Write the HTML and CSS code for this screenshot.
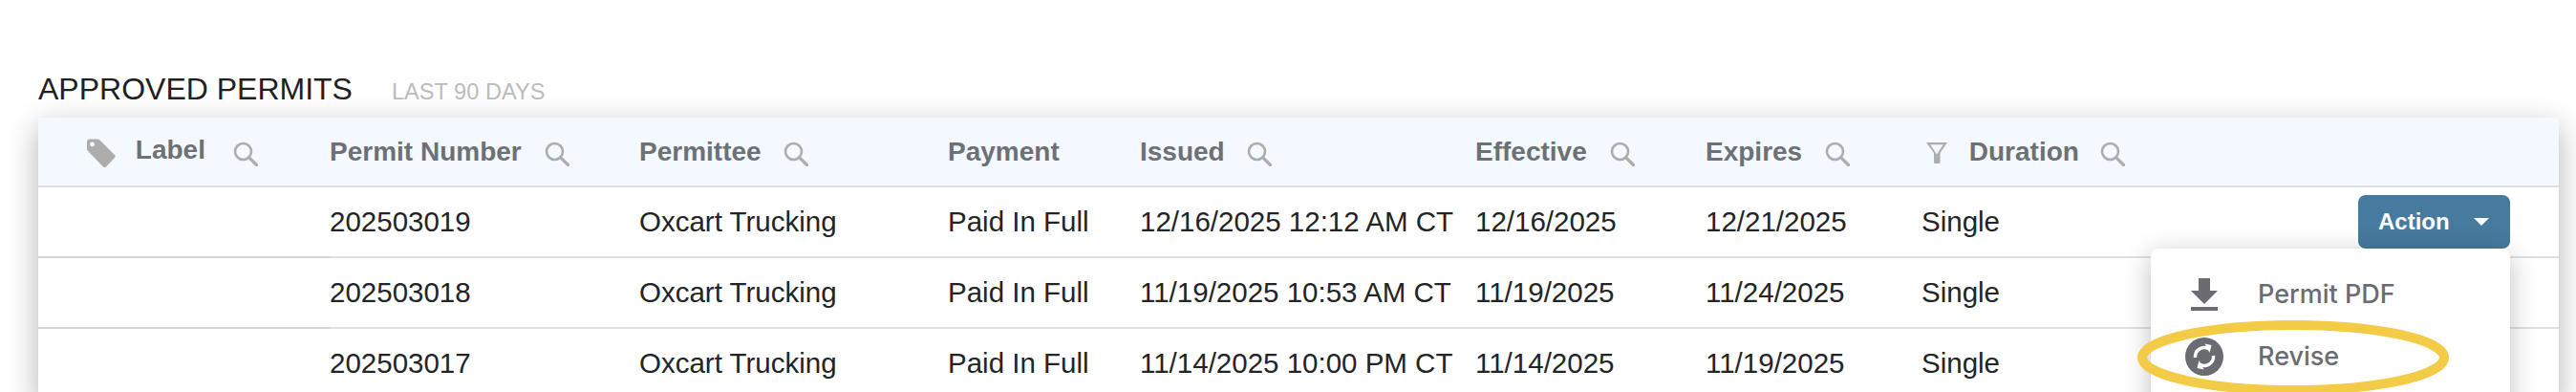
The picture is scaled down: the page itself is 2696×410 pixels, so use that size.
FILE: index.html
```html
<!DOCTYPE html>
<html lang="en">
<head>
    <meta charset="UTF-8">
    <meta name="viewport" content="width=device-width, initial-scale=1.0">
    <title>Approved Permits</title>
    <link rel="stylesheet" href="styles.css">
</head>
<body>
    <svg width="0" height="0" class="icon-defs">
        <symbol id="search" viewBox="0 0 26 26">
            <circle cx="10.5" cy="10.5" r="8.5" fill="none" stroke="currentColor" stroke-width="2.6"/>
            <path d="M16.8 16.8 L24.5 24.5" fill="none" stroke="currentColor" stroke-width="3.2" stroke-linecap="round"/>
        </symbol>
    </svg>

    <div class="prev-card"></div>

    <div class="section-title">
        <h2>APPROVED PERMITS</h2>
        <span class="range">LAST 90 DAYS</span>
    </div>

    <main class="card">
        <table>
            <colgroup>
                <col class="col-label">
                <col class="col-number">
                <col class="col-permittee">
                <col class="col-payment">
                <col class="col-issued">
                <col class="col-effective">
                <col class="col-expires">
                <col class="col-duration">
                <col>
            </colgroup>
            <thead>
                <tr>
                    <th class="label-head">
                        <svg class="tag-icon" viewBox="0 0 30 30"><path d="M0 3.5 Q0 0.5 3 0.5 L11 0.5 Q12.5 0.5 13.5 1.5 L29 17 Q30.5 18.5 29 20 L20 29.5 Q18.5 30.8 17 29.5 L1.5 13.5 Q0 12 0 10.5 Z M5.5 3.5 A2.4 2.4 0 1 0 5.6 8.3 A2.4 2.4 0 1 0 5.5 3.5 Z" fill-rule="evenodd"/></svg>
                        <span>Label</span>
                        <svg class="search-icon"><use href="#search"/></svg>
                    </th>
                    <th>Permit Number <svg class="search-icon"><use href="#search"/></svg></th>
                    <th>Permittee <svg class="search-icon"><use href="#search"/></svg></th>
                    <th>Payment</th>
                    <th>Issued <svg class="search-icon"><use href="#search"/></svg></th>
                    <th>Effective <svg class="search-icon"><use href="#search"/></svg></th>
                    <th>Expires <svg class="search-icon"><use href="#search"/></svg></th>
                    <th class="duration-head">
                        <svg class="filter-icon" viewBox="0 0 22 22"><path d="M0 0 H22 L14.5 11 V20.5 Q14.5 22 13 22 H9.5 Q8 22 8 20.5 V11 Z M4.2 2.2 L11 12.5 L17.8 2.2 Z" fill-rule="evenodd"/></svg>
                        <span>Duration</span>
                        <svg class="search-icon"><use href="#search"/></svg>
                    </th>
                    <th></th>
                </tr>
            </thead>
            <tbody>
                <tr>
                    <td></td>
                    <td>202503019</td>
                    <td>Oxcart Trucking</td>
                    <td>Paid In Full</td>
                    <td>12/16/2025 12:12 AM CT</td>
                    <td>12/16/2025</td>
                    <td>12/21/2025</td>
                    <td>Single</td>
                    <td class="action-cell">
                        <div class="action-wrap">
                            <button class="action-btn">Action <span class="caret"></span></button>
                            <div class="action-menu">
                                <div class="menu-item">
                                    <svg class="pdf-icon" viewBox="0 0 28 34"><path d="M8 0 H20 V13 H28 L14 27 L0 13 H8 Z M0 30 H28 V34 H0 Z"/></svg>
                                    <span>Permit PDF</span>
                                </div>
                                <div class="menu-item">
                                    <svg class="revise-icon" viewBox="0 0 40 40">
                                        <circle cx="20" cy="20" r="20"/>
                                        <path d="M10.5 21 A9.5 9.5 0 0 1 25 12" fill="none" stroke="#fff" stroke-width="3.4"/>
                                        <path d="M20.5 6.5 L27.5 8 L25.5 16 Z" fill="#fff"/>
                                        <path d="M29.5 19 A9.5 9.5 0 0 1 15 28" fill="none" stroke="#fff" stroke-width="3.4"/>
                                        <path d="M19.5 33.5 L12.5 32 L14.5 24 Z" fill="#fff"/>
                                    </svg>
                                    <span>Revise</span>
                                </div>
                                <svg class="highlight" viewBox="0 0 328 78"><ellipse cx="164" cy="39" rx="158" ry="34" fill="none" stroke="#f3cb47" stroke-width="10"/></svg>
                            </div>
                        </div>
                    </td>
                </tr>
                <tr>
                    <td></td>
                    <td>202503018</td>
                    <td>Oxcart Trucking</td>
                    <td>Paid In Full</td>
                    <td>11/19/2025 10:53 AM CT</td>
                    <td>11/19/2025</td>
                    <td>11/24/2025</td>
                    <td>Single</td>
                    <td></td>
                </tr>
                <tr>
                    <td></td>
                    <td>202503017</td>
                    <td>Oxcart Trucking</td>
                    <td>Paid In Full</td>
                    <td>11/14/2025 10:00 PM CT</td>
                    <td>11/14/2025</td>
                    <td>11/19/2025</td>
                    <td>Single</td>
                    <td></td>
                </tr>
            </tbody>
        </table>
    </main>
</body>
</html>
```

FILE: styles.css
```css
html, body {
    height: 100%;
    overflow: hidden;
}

body {
    margin: 0;
    padding: 0 18px 0 40px;
    font-family: "Liberation Sans", Arial, sans-serif;
    background-color: #fff;
    color: #222426;
}

.icon-defs {
    position: absolute;
}

.prev-card {
    height: 0;
    box-shadow: 0 0 5px rgba(0, 0, 0, 0.12);
}

.section-title {
    display: flex;
    align-items: baseline;
    gap: 41px;
    height: 123px;
    box-sizing: border-box;
    padding-top: 73px;
}

.section-title h2 {
    margin: 0;
    font-size: 32px;
    line-height: 40px;
    font-weight: 400;
    color: #1f2022;
}

.range {
    font-size: 23.6px;
    color: #bcbcbc;
}

.card {
    background: #fff;
    box-shadow: 0 10px 30px rgba(0, 0, 0, 0.3);
}

table {
    width: 100%;
    border-collapse: collapse;
    table-layout: fixed;
}

.col-label { width: 305px; }
.col-number { width: 324px; }
.col-permittee { width: 323px; }
.col-payment { width: 201px; }
.col-issued { width: 351px; }
.col-effective { width: 241px; }
.col-expires { width: 226px; }
.col-duration { width: 200px; }

th {
    height: 71px;
    padding: 0;
    background: #f3f9ff;
    border-bottom: 2px solid #dadfe5;
    text-align: left;
    font-size: 28px;
    font-weight: 700;
    color: #6c7175;
    white-space: nowrap;
}

td {
    height: 72px;
    padding: 0;
    border-bottom: 2px solid #e0e0e0;
    font-size: 29.5px;
    white-space: nowrap;
}

td:first-child {
    border-bottom-color: #d4d4d4;
}

.search-icon {
    width: 26px;
    height: 26px;
    margin-left: 16px;
    vertical-align: -6px;
    color: #adadad;
}

.label-head {
    padding-left: 51px;
}

.label-head span {
    margin-left: 13px;
    position: relative;
    top: -2px;
}

.label-head .search-icon {
    margin-left: 21px;
}

.tag-icon {
    width: 30px;
    height: 30px;
    vertical-align: -7px;
    fill: #adadad;
}

.duration-head {
    padding-left: 5px;
}

.duration-head span {
    margin-left: 15px;
}

.duration-head .search-icon {
    margin-left: 14px;
}

.filter-icon {
    width: 22px;
    height: 22px;
    vertical-align: -3px;
    fill: #adadad;
}

.action-cell {
    padding-right: 51px;
}

.action-wrap {
    position: relative;
    display: flex;
    justify-content: flex-end;
}

.action-btn {
    width: 159px;
    height: 56px;
    border: none;
    border-radius: 8px;
    background: #467a9e;
    color: #fff;
    font-family: inherit;
    font-size: 24px;
    font-weight: 700;
    display: flex;
    align-items: center;
    justify-content: space-between;
    padding: 0 22px 0 21px;
}

.caret {
    border-left: 8px solid transparent;
    border-right: 8px solid transparent;
    border-top: 8px solid #fff;
}

.action-menu {
    position: absolute;
    top: 56px;
    right: 0;
    width: 376px;
    height: 200px;
    padding-top: 15px;
    box-sizing: border-box;
    background: #fff;
    border-radius: 8px;
    box-shadow: 0 6px 28px rgba(0, 0, 0, 0.25);
}

.menu-item {
    display: flex;
    align-items: center;
    height: 65px;
    padding-left: 36px;
    font-family: "Inter", sans-serif;
    font-size: 27px;
    font-weight: 500;
    color: #6b6c72;
}

.menu-item span {
    margin-left: 36px;
}

.pdf-icon {
    width: 28px;
    height: 34px;
    margin: 0 6px;
    fill: #6b6c72;
}

.revise-icon {
    width: 40px;
    height: 40px;
    fill: #6b6c72;
}

.highlight {
    position: absolute;
    left: -15px;
    top: 75px;
    width: 328px;
    height: 78px;
}
```
